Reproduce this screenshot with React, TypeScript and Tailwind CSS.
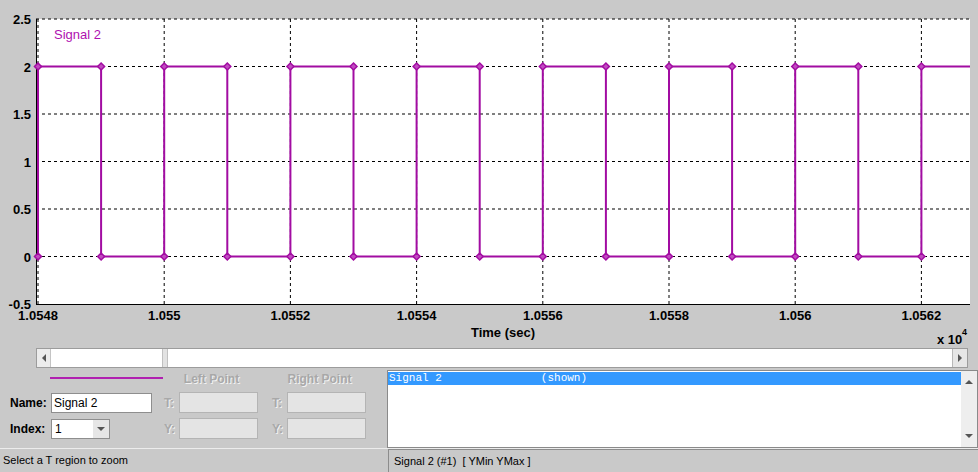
import React from "react";

const PURPLE = "#a20ca2";
const X0 = 38;
const XSTEP = 126.2;
const yOf = (v: number) => 256.5 - v * 95;

const xTicks = ["1.0548", "1.055", "1.0552", "1.0554", "1.0556", "1.0558", "1.056", "1.0562"];
const yTicks = [2.5, 2, 1.5, 1, 0.5, 0, -0.5];

function Plot() {
  const pts: number[] = [];
  for (let j = 0; j <= 14; j++) pts.push(X0 + j * (XSTEP / 2));
  const hi = yOf(2);
  const lo = yOf(0);

  let d = `M ${pts[0]} ${lo} L ${pts[0]} ${hi}`;
  pts.forEach((x, j) => {
    if (j === 0) return;
    const prev = (j - 1) % 2 === 0 ? hi : lo;
    const next = j % 2 === 0 ? hi : lo;
    d += ` L ${x} ${prev} L ${x} ${next}`;
  });
  d += ` L 970 ${hi}`;

  const diamond = (x: number, y: number) =>
    `${x},${y - 3.5} ${x + 3.5},${y} ${x},${y + 3.5} ${x - 3.5},${y}`;

  return (
    <svg width="978" height="348" className="block shrink-0" style={{ fontFamily: '"Liberation Sans", Arial, sans-serif' }}>
      <rect x="36" y="19" width="934" height="285" fill="#ffffff" />
      {xTicks.map((_, i) => (
        <line
          key={"vx" + i}
          x1={X0 + i * XSTEP}
          x2={X0 + i * XSTEP}
          y1="19"
          y2="304"
          stroke="#000"
          strokeWidth="1"
          strokeDasharray="3 3"
        />
      ))}
      {yTicks.slice(0, 6).map((v) => (
        <line
          key={"hy" + v}
          x1="36"
          x2="970"
          y1={yOf(v)}
          y2={yOf(v)}
          stroke="#000"
          strokeWidth="1"
          strokeDasharray="3 3"
        />
      ))}
      <line x1="36.5" x2="36.5" y1="19" y2="304.5" stroke="#000" strokeWidth="1" />
      <line x1="36" x2="970" y1="304.5" y2="304.5" stroke="#000" strokeWidth="1" />

      <path d={d} fill="none" stroke={PURPLE} strokeWidth="2" strokeLinejoin="miter" />
      {pts.map((x) => (
        <g key={"m" + x}>
          <polygon points={diamond(x, hi)} fill="#c04cc0" stroke={PURPLE} strokeWidth="1.5" />
          <polygon points={diamond(x, lo)} fill="#c04cc0" stroke={PURPLE} strokeWidth="1.5" />
        </g>
      ))}

      <text x="54" y="38.5" fontSize="13" fill="#b010b0">Signal 2</text>

      {yTicks.map((v) => (
        <text key={"yl" + v} x="31" y={yOf(v) + 5} fontSize="13" fontWeight="bold" textAnchor="end" fill="#000">
          {v}
        </text>
      ))}
      {xTicks.map((t, i) => (
        <text key={"xl" + t} x={X0 + i * XSTEP} y="320" fontSize="13" fontWeight="bold" textAnchor="middle" fill="#000">
          {t}
        </text>
      ))}
      <text x="503" y="337" fontSize="13" fontWeight="bold" textAnchor="middle" fill="#000">
        Time (sec)
      </text>
      <text x="937" y="344" fontSize="13" fontWeight="bold" fill="#000">
        x 10
      </text>
      <text x="962" y="335" fontSize="9" fontWeight="bold" fill="#000">
        4
      </text>
    </svg>
  );
}

function Arrow({ dir }: { dir: "left" | "right" | "up" | "down" }) {
  const p = {
    left: "5,1 5,9 1,5",
    right: "1,1 1,9 5,5",
    up: "1,5 9,5 5,1",
    down: "1,1 9,1 5,5",
  }[dir];
  const w = dir === "left" || dir === "right" ? 6 : 10;
  const h = dir === "left" || dir === "right" ? 10 : 6;
  return (
    <svg width={w} height={h}>
      <polygon points={p} fill="#555" />
    </svg>
  );
}

function HScroll() {
  return (
    <div className="pl-[36px] pr-[10px]">
      <div className="flex h-[20px] border border-[#9c9c9c] bg-white">
        <div className="flex w-[14px] items-center justify-center border-r border-[#c4c4c4] bg-[#ececec]">
          <Arrow dir="left" />
        </div>
        <div className="w-[111px]" />
        <div className="w-[6px] border-x border-[#c0c0c0] bg-[#e2e2e2]" />
        <div className="flex-1" />
        <div className="flex w-[15px] items-center justify-center border-l border-[#b8b8b8] bg-[#e6e6e6]">
          <Arrow dir="right" />
        </div>
      </div>
    </div>
  );
}

const labelCls = "text-[12px] font-bold text-black";
const dimLabel = "w-[15px] text-[12px] font-bold text-[#a8a8a8] [text-shadow:1px_1px_0_#f2f2f2]";
const dimInput = "h-[21px] w-[79px] border border-[#b4b4b4] bg-[#e4e4e4]";

function Form() {
  return (
    <div className="flex w-[387px] shrink-0 flex-col">
      <div className="flex h-[22px] items-center">
        <div className="ml-[50px] mb-[3px] h-[2px] w-[113px] bg-[#b020b0]" />
        <div className="ml-[9px] w-[79px] text-center text-[12px] font-bold text-[#a8a8a8] [text-shadow:1px_1px_0_#f2f2f2]">
          Left Point
        </div>
        <div className="ml-[29px] w-[79px] text-center text-[12px] font-bold text-[#a8a8a8] [text-shadow:1px_1px_0_#f2f2f2]">
          Right Point
        </div>
      </div>
      <div className="mt-[2px] flex h-[21px] items-center pl-[10px]">
        <div className={"w-[41px] " + labelCls}>Name:</div>
        <div className="flex h-[20px] w-[101px] items-center border border-[#8e8e8e] bg-white pl-[2px] text-[12px] text-black">
          Signal 2
        </div>
        <div className={"ml-[12px] " + dimLabel}>T:</div>
        <div className={dimInput} />
        <div className={"ml-[14px] " + dimLabel}>T:</div>
        <div className={dimInput} />
      </div>
      <div className="mt-[5px] flex h-[21px] items-center pl-[10px]">
        <div className={"w-[41px] " + labelCls}>Index:</div>
        <div className="flex h-[20px] w-[59px] border border-[#8e8e8e] bg-white">
          <div className="flex flex-1 items-center pl-[3px] text-[12px] text-black">1</div>
          <div className="flex w-[16px] items-center justify-center bg-[#e6e6e6]">
            <Arrow dir="down" />
          </div>
        </div>
        <div className={"ml-[54px] " + dimLabel}>Y:</div>
        <div className={dimInput} />
        <div className={"ml-[14px] " + dimLabel}>Y:</div>
        <div className={dimInput} />
      </div>
    </div>
  );
}

function SignalList() {
  return (
    <div className="mt-[2px] flex h-[78px] flex-1 border border-[#8a8a8a] bg-white">
      <div className="flex-1 pt-px">
        <div
          className="h-[13px] whitespace-pre bg-[#3399ff] pl-px text-[11px] leading-[13px] text-white"
          style={{ fontFamily: '"Liberation Mono", "Courier New", monospace' }}
        >
          {"Signal 2               (shown)"}
        </div>
      </div>
      <div className="flex w-[16px] flex-col items-center justify-between bg-[#eeeeee] py-[8px]">
        <Arrow dir="up" />
        <Arrow dir="down" />
      </div>
    </div>
  );
}

function StatusBar() {
  return (
    <div className="flex h-[24px] border-t border-[#ececec] text-[11px] text-black">
      <div className="flex w-[388px] items-center pl-[3px]">Select a T region to zoom</div>
      <div className="flex flex-1 items-center border-l border-t border-[#8c8c8c] pl-[5px]">
        Signal 2 (#1)&nbsp; [ YMin YMax ]
      </div>
    </div>
  );
}

export default function App() {
  return (
    <div
      className="flex h-[472px] w-[978px] flex-col overflow-hidden bg-[#c9c9c9]"
      style={{ fontFamily: '"Liberation Sans", Arial, sans-serif' }}
    >
      <Plot />
      <HScroll />
      <div className="flex h-[80px]">
        <Form />
        <SignalList />
      </div>
      <StatusBar />
    </div>
  );
}
